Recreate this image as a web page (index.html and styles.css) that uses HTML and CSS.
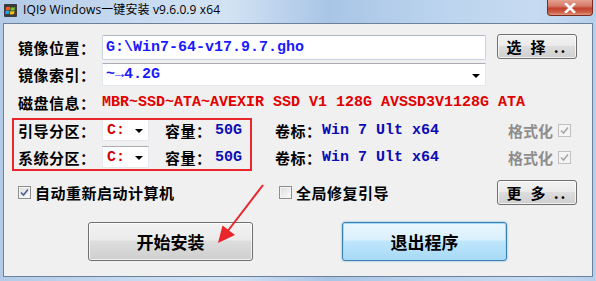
FILE: index.html
```html
<!DOCTYPE html>
<html lang="zh-CN">
<head>
    <meta charset="UTF-8">
    <title>IQI9 Windows一键安装 v9.6.0.9 x64</title>
    <link rel="stylesheet" href="styles.css">
</head>
<body>
    <div class="window">
        <div class="titlebar">
            <svg class="app-icon" viewBox="0 0 13 13">
                <rect x="0" y="0" width="13" height="13" rx="1" fill="#3b3b3b"/>
                <path d="M2 3.2 Q4 2.2 6.1 3 L5.7 6.2 Q3.7 5.5 1.7 6.4 Z" fill="#f25a22"/>
                <path d="M6.8 3.2 Q8.8 4 11 3 L10.6 6.2 Q8.5 7.1 6.4 6.3 Z" fill="#7cbb2a"/>
                <path d="M1.6 7.1 Q3.6 6.2 5.6 6.9 L5.2 10.1 Q3.2 9.4 1.2 10.3 Z" fill="#1fa2e6"/>
                <path d="M6.3 7 Q8.4 7.8 10.5 6.9 L10.1 10.1 Q8 11 5.9 10.2 Z" fill="#fcc013"/>
            </svg>
            <span class="title">IQI9 Windows一键安装 v9.6.0.9 x64</span>
            <div class="close-btn">
                <svg viewBox="0 0 14 10"><path d="M3 1 L11 9 M11 1 L3 9" stroke="#fff" stroke-width="2.6" stroke-linecap="square"/></svg>
            </div>
        </div>

        <div class="client">
            <div class="row row-path">
                <span class="label">镜像位置：</span>
                <div class="field path mono">G:\Win7-64-v17.9.7.gho</div>
                <div class="btn btn-small"><span class="btn-word">选</span><span class="btn-word">择</span><span class="dots">..</span></div>
            </div>

            <div class="row row-index">
                <span class="label">镜像索引：</span>
                <div class="combo combo-wide mono"><span>~→4.2G</span><i class="caret"></i></div>
            </div>

            <div class="row row-disk">
                <span class="label">磁盘信息：</span>
                <span class="mono red">MBR~SSD~ATA~AVEXIR SSD V1 128G AVSSD3V1128G ATA</span>
            </div>

            <div class="row row-part">
                <span class="label">引导分区：</span>
                <div class="combo combo-drive mono"><span>C:</span><i class="caret"></i></div>
                <span class="label cap">容量：</span>
                <span class="mono blue size">50G</span>
                <span class="label vol">卷标：</span>
                <span class="mono blue vol-name">Win 7 Ult x64</span>
                <span class="muted">格式化</span>
                <span class="check disabled"><svg viewBox="0 0 11 11"><path d="M2 5.5 L4.5 8 L9 2.5" fill="none" stroke="#a6a6a6" stroke-width="1.6"/></svg></span>
            </div>

            <div class="row row-part second">
                <span class="label">系统分区：</span>
                <div class="combo combo-drive mono"><span>C:</span><i class="caret"></i></div>
                <span class="label cap">容量：</span>
                <span class="mono blue size">50G</span>
                <span class="label vol">卷标：</span>
                <span class="mono blue vol-name">Win 7 Ult x64</span>
                <span class="muted">格式化</span>
                <span class="check disabled"><svg viewBox="0 0 11 11"><path d="M2 5.5 L4.5 8 L9 2.5" fill="none" stroke="#a6a6a6" stroke-width="1.6"/></svg></span>
            </div>

            <div class="row row-options">
                <label class="option opt-reboot">
                    <span class="check"><svg viewBox="0 0 11 11"><path d="M2 5.5 L4.5 8 L9 2.5" fill="none" stroke="#4a5f97" stroke-width="1.6"/></svg></span>
                    <span class="opt-text">自动重新启动计算机</span>
                </label>
                <label class="option opt-repair">
                    <span class="check"></span>
                    <span class="opt-text">全局修复引导</span>
                </label>
                <div class="btn btn-small"><span class="btn-word">更</span><span class="btn-word">多</span><span class="dots">..</span></div>
            </div>

            <div class="actions">
                <div class="btn btn-big">开始安装</div>
                <div class="btn btn-big focused">退出程序</div>
            </div>

            <div class="highlight"></div>
            <svg class="pointer" viewBox="0 0 60 70">
                <line x1="53" y1="5" x2="17" y2="52" stroke="#e8262b" stroke-width="2"/>
                <polygon points="8,63 12.5,45.5 25,55" fill="#e8262b"/>
            </svg>
        </div>
    </div>
</body>
</html>
```

FILE: styles.css
```css
body {
    margin: 0;
    background: #b9d1ea;
    overflow: hidden;
}
.window {
    width: 596px;
    height: 281px;
    display: flex;
    flex-direction: column;
    background: linear-gradient(90deg, #b3cbe7 0%, #c8dbf1 25%, #d3e3f4 38%, #a9c5e6 55%, #bcd4ee 75%, #c6dbf1 90%, #b6cfea 100%);
    font-family: "Noto Sans CJK SC", sans-serif;
}
.titlebar {
    height: 23px;
    display: flex;
    align-items: flex-start;
    padding: 0 3px 0 4px;
}
.app-icon {
    width: 13px;
    height: 13px;
    margin-top: 4px;
}
.title {
    margin-left: 6px;
    margin-top: 2px;
    font-family: "Open Sans", "Noto Sans CJK SC", sans-serif;
    font-size: 12px;
    line-height: 16px;
    color: #000;
    letter-spacing: 0.1px;
}
.close-btn {
    margin-left: auto;
    width: 44px;
    height: 15px;
    border: 1px solid #7a2a20;
    border-top: none;
    border-radius: 0 0 4px 4px;
    background: linear-gradient(#e6a090 0%, #d57a68 40%, #c4432f 55%, #cc5c45 80%, #e09a7e 100%);
    display: flex;
    align-items: center;
    justify-content: center;
}
.close-btn svg {
    width: 14px;
    height: 10px;
}
.client {
    position: relative;
    margin: 0 3px 4px 3px;
    height: 252px;
    border: 1px solid #6c8199;
    background: #f0f0f0;
}
.row {
    display: flex;
    align-items: center;
    padding-left: 14px;
}
.label {
    width: 84px;
    font-size: 15px;
    font-weight: bold;
    color: #000;
    white-space: nowrap;
    letter-spacing: 0.5px;
}
.mono {
    font-family: "Liberation Mono", monospace;
    font-size: 15px;
    font-weight: bold;
}
.red { color: #e30000; }
.blue { color: #0c0cb4; }
.row-path {
    margin-top: 10px;
    height: 26px;
}
.field {
    box-sizing: border-box;
    width: 384px;
    height: 25px;
    margin-top: 1px;
    border: 1px solid #c5d3e3;
    border-top-color: #abb7c6;
    border-radius: 2px;
    background: #fff;
    padding-left: 3px;
    display: flex;
    align-items: center;
}
.path { color: #1a1aff; }
.btn {
    box-sizing: border-box;
    border: 1px solid #707070;
    border-radius: 3px;
    background: linear-gradient(#f2f2f2 0%, #ebebeb 45%, #dddddd 50%, #cfcfcf 100%);
    box-shadow: inset 0 0 0 1px rgba(255, 255, 255, 0.7);
    display: flex;
    align-items: center;
    justify-content: center;
    font-size: 16px;
    font-weight: bold;
    color: #000;
}
.btn-small {
    width: 80px;
    height: 25px;
    margin-left: 11px;
    margin-bottom: 1px;
    font-size: 15px;
    gap: 9px;
}
.dots {
    margin-left: -1px;
    letter-spacing: 2px;
}
.row-index {
    margin-top: 3px;
    height: 23px;
}
.combo {
    box-sizing: border-box;
    height: 23px;
    border: 1px solid #e3e9ef;
    border-top-color: #abadb3;
    background: #fff;
    display: flex;
    align-items: center;
    padding: 0 5px 0 3px;
}
.combo span {
    flex: 1;
}
.combo-wide {
    width: 384px;
    color: #1a1aff;
}
.caret {
    width: 0;
    height: 0;
    border-left: 4px solid transparent;
    border-right: 4px solid transparent;
    border-top: 4px solid #000;
    margin-top: 2px;
}
.row-disk {
    margin-top: 2px;
    height: 28px;
}
.row-part {
    margin-top: 3px;
    height: 22px;
}
.row-part.second {
    margin-top: 5px;
}
.combo-drive {
    width: 47px;
    height: 22px;
    color: #d40000;
    padding-left: 4px;
}
.cap {
    width: 50px;
    margin-left: 16px;
}
.size {
    width: 60px;
}
.vol {
    width: 47px;
}
.vol-name {
    width: 186px;
    white-space: pre;
}
.muted {
    width: 50px;
    font-size: 15px;
    font-weight: bold;
    color: #8d8d8d;
    white-space: nowrap;
}
.check {
    box-sizing: border-box;
    width: 13px;
    height: 13px;
    border: 1px solid #8f8f8f;
    background: linear-gradient(135deg, #dcdcdc, #fbfbfb);
    box-shadow: inset 0 0 0 1px #f4f4f4;
    display: flex;
    align-items: center;
    justify-content: center;
    flex-shrink: 0;
}
.check svg {
    width: 11px;
    height: 11px;
}
.check.disabled {
    border-color: #c0c0c0;
    background: #f4f4f4;
}
.row-options {
    margin-top: 12px;
    height: 25px;
}
.option {
    display: flex;
    align-items: center;
    gap: 4px;
}
.opt-reboot {
    width: 261px;
}
.opt-repair {
    width: 207px;
}
.opt-text {
    font-size: 15px;
    font-weight: bold;
    letter-spacing: 0.5px;
    color: #000;
}
.actions {
    display: flex;
    gap: 89px;
    padding-left: 84px;
    margin-top: 17px;
}
.btn-big {
    width: 165px;
    height: 39px;
    font-size: 17px;
}
.btn-big.focused {
    border-color: #3c7fb1;
    background: linear-gradient(#eaf6fd 0%, #d9f0fc 45%, #bee6fd 50%, #a7d9f5 100%);
    box-shadow: inset 0 0 0 1px #a4d9f6, 0 0 2px #5aa7d8;
}
.highlight {
    position: absolute;
    left: 8px;
    top: 94px;
    width: 240px;
    height: 53px;
    box-sizing: border-box;
    border: 2px solid #e8262b;
}
.pointer {
    position: absolute;
    left: 206px;
    top: 156px;
    width: 60px;
    height: 70px;
}
```
